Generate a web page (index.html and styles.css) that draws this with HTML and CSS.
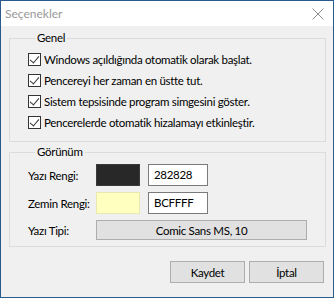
FILE: index.html
```html
<!DOCTYPE html>
<html lang="tr">
<head>
    <meta charset="UTF-8">
    <title>Seçenekler</title>
    <link rel="stylesheet" href="styles.css">
</head>
<body>

    <div class="window">
        <div class="titlebar">
            <span class="title">Seçenekler</span>
            <svg class="close" width="12" height="12" viewBox="0 0 12 12">
                <path d="M0.5 0.5 L11.5 11.5 M11.5 0.5 L0.5 11.5" stroke="#8c8c8c" stroke-width="1" fill="none"/>
            </svg>
        </div>

        <div class="content">
            <fieldset class="group general">
                <legend>Genel</legend>
                <label class="check"><span class="box"></span>Windows açıldığında otomatik olarak başlat.</label>
                <label class="check"><span class="box"></span>Pencereyi her zaman en üstte tut.</label>
                <label class="check"><span class="box"></span>Sistem tepsisinde program simgesini göster.</label>
                <label class="check"><span class="box"></span>Pencerelerde otomatik hizalamayı etkinleştir.</label>
            </fieldset>

            <fieldset class="group look">
                <legend>Görünüm</legend>
                <div class="row">
                    <span class="lbl">Yazı Rengi:</span>
                    <span class="swatch dark"></span>
                    <span class="hex">282828</span>
                </div>
                <div class="row">
                    <span class="lbl">Zemin Rengi:</span>
                    <span class="swatch light"></span>
                    <span class="hex">BCFFFF</span>
                </div>
                <div class="row font-row">
                    <span class="lbl">Yazı Tipi:</span>
                    <span class="btn font-btn">Comic Sans MS, 10</span>
                </div>
            </fieldset>

            <div class="actions">
                <span class="btn">Kaydet</span>
                <span class="btn">İptal</span>
            </div>
        </div>
    </div>

</body>
</html>
```

FILE: styles.css
```css
* {
    margin: 0;
    padding: 0;
    box-sizing: border-box;
}

body {
    background: #fff;
    font-family: Lato, "Noto Sans", Arial, sans-serif;
    font-size: 11.5px;
    letter-spacing: -0.3px;
    color: #000;
}

.window {
    width: 334px;
    height: 298px;
    border: 1px solid #2b5b8e;
    background: #f0f0f0;
    display: flex;
    flex-direction: column;
}

.titlebar {
    height: 25px;
    background: #fff;
    display: flex;
    align-items: center;
    justify-content: space-between;
    padding: 0 9px 0 4px;
}

.title {
    color: #999;
    font-size: 12px;
    letter-spacing: 0;
    line-height: 14px;
}

.close {
    display: block;
    margin-top: 1px;
}

.content {
    padding: 5px 7px 0 8px;
}

.group {
    border: 1px solid #dcdcdc;
    padding: 4px 0 8px 18px;
}

.group legend {
    margin-left: 7px;
    padding: 0 2px;
    line-height: 14px;
}

.check {
    display: flex;
    align-items: center;
    height: 21px;
    white-space: nowrap;
}

.box {
    width: 13px;
    height: 13px;
    margin-right: 3px;
    border: 1px solid #333;
    background: #fff;
    position: relative;
}

.box::after {
    content: "";
    position: absolute;
    left: 3px;
    top: 0px;
    width: 4px;
    height: 8px;
    border-right: 1.2px solid #333;
    border-bottom: 1.2px solid #333;
    transform: rotate(40deg);
}

.look {
    margin-top: 3px;
    padding-top: 5px;
    padding-bottom: 6px;
}

.row {
    display: flex;
    align-items: center;
    height: 22px;
    margin-bottom: 6px;
    white-space: nowrap;
}

.lbl {
    width: 68px;
}

.swatch {
    width: 44px;
    height: 22px;
    margin-right: 8px;
}

.swatch.dark {
    background: #282828;
    border: 1px solid #3a3a3a;
}

.swatch.light {
    background: #ffffc0;
    border: 1px solid #e8e8b0;
}

.hex {
    width: 60px;
    height: 22px;
    border: 1px solid #7a7a7a;
    background: #fff;
    padding-left: 5px;
    line-height: 20px;
}

.font-row {
    height: 20px;
    margin-top: 2px;
    margin-bottom: 0;
}

.btn {
    display: flex;
    align-items: center;
    justify-content: center;
    background: #e1e1e1;
    border: 1px solid #adadad;
}

.font-btn {
    width: 211px;
    height: 20px;
}

.actions {
    display: flex;
    justify-content: flex-end;
    gap: 4px;
    padding-right: 2px;
    margin-top: 14px;
}

.actions .btn {
    width: 75px;
    height: 22px;
}
```
